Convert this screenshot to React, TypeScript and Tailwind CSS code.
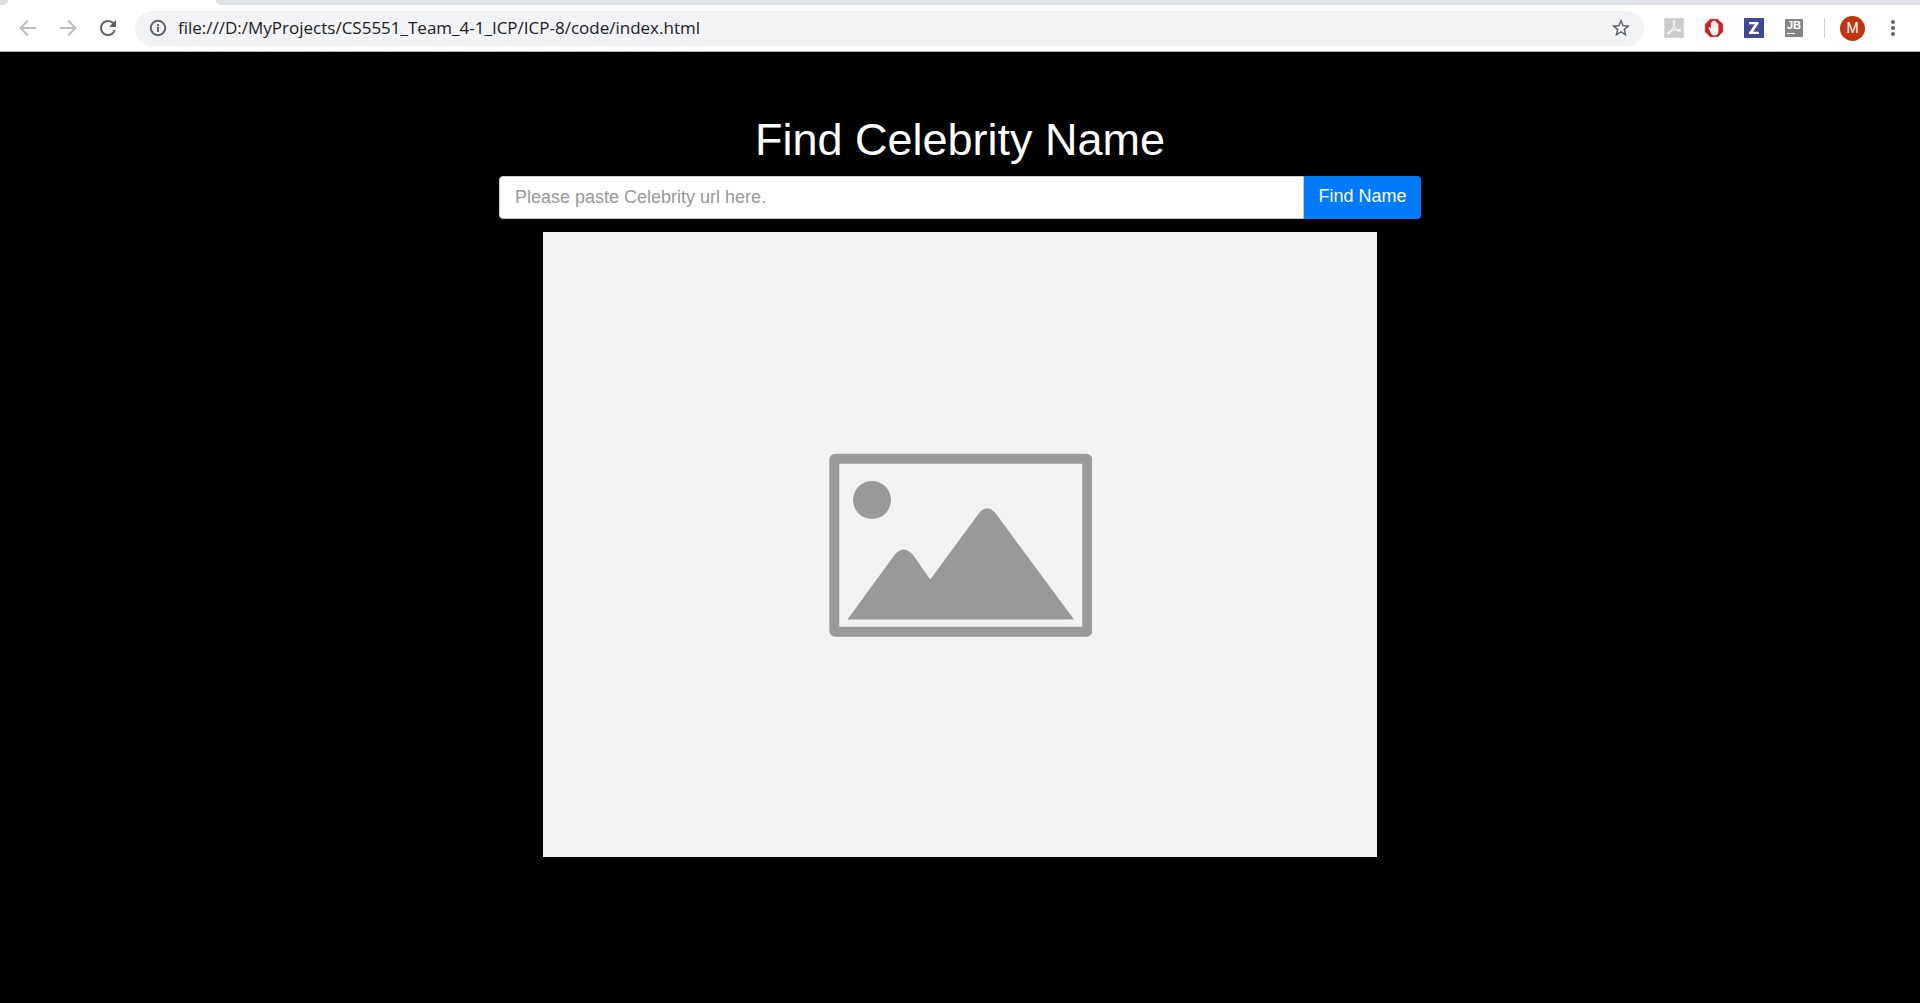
import React from "react";

function BrowserBar() {
  return (
    <header className="bg-white border-b border-[#b6b4b6]">
      <div className="flex h-[5px] bg-white">
        <div className="w-2 rounded-br-md bg-[#dee1e6]" />
        <div className="w-52" />
        <div className="flex-1 rounded-bl-md bg-[#dee1e6]" />
      </div>
      <div className="flex h-[46px] items-center pl-4">
        <button aria-label="Back" className="flex size-6 items-center justify-center text-[#bbbdbf]">
          <svg viewBox="0 0 24 24" className="size-6" fill="none" stroke="currentColor" strokeWidth="2">
            <path d="M20 12H5.500M12 4.500 4.500 12l7.500 7.500" />
          </svg>
        </button>
        <button aria-label="Forward" className="ml-4 flex size-6 items-center justify-center text-[#bbbdbf]">
          <svg viewBox="0 0 24 24" className="size-6" fill="none" stroke="currentColor" strokeWidth="2">
            <path d="M4 12h14.500M12 4.500l7.500 7.500-7.500 7.500" />
          </svg>
        </button>
        <button aria-label="Reload" className="ml-4 flex size-6 items-center justify-center text-[#5f6368]">
          <svg viewBox="0 0 24 24" className="size-6" fill="currentColor">
            <path d="M17.650 6.350A7.958 7.958 0 0 0 12 4a8 8 0 1 0 7.730 10h-2.080A6 6 0 1 1 12 6c1.660 0 3.140.69 4.220 1.780L13 11h7V4z" />
          </svg>
        </button>
        <div className="ml-[15px] flex h-[35px] flex-1 items-center rounded-full bg-[#f1f3f4] pl-[13px] pr-3">
          <svg viewBox="0 0 20 20" className="size-5 shrink-0 text-[#5f6368]" fill="none" stroke="currentColor" strokeWidth="2">
            <circle cx="10" cy="10" r="7.200" />
            <path d="M10 9v5M10 6v2" />
          </svg>
          <input
            aria-label="Address"
            defaultValue="file:///D:/MyProjects/CS5551_Team_4-1_ICP/ICP-8/code/index.html"
            className="ml-[10px] h-7 min-w-0 flex-1 bg-transparent pb-[2px] font-['Open_Sans',sans-serif] text-[17px] text-[#202124] outline-none"
          />
          <button aria-label="Bookmark this page" className="text-[#5f6368]">
            <svg viewBox="0 0 24 24" className="size-[22px]" fill="currentColor">
              <path d="M22 9.240l-7.190-.62L12 2 9.190 8.630 2 9.240l5.460 4.730L5.820 21 12 17.270 18.180 21l-1.630-7.030L22 9.240zM12 15.400l-3.760 2.270 1-4.280-3.320-2.880 4.380-.38L12 6.100l1.710 4.040 4.380.38-3.320 2.880 1 4.280L12 15.400z" />
            </svg>
          </button>
        </div>
        <div className="ml-5 flex items-center gap-5">
          <button aria-label="Acrobat">
            <svg viewBox="0 0 20 20" className="size-5">
              <rect x=".5" y=".5" width="19" height="19" fill="#cbcbcb" stroke="#d8d8d8" />
              <path
                d="M9.200 3.500C9.200 2.600 11 2.600 10.800 4.200 10.600 7.500 7.500 13 5 15.500c-.8.8-1.800.2-1.200-.6 1.600-2 7.200-3.600 11.400-3.200 1.800.2 1.600 1.700 0 1.500-3.200-.5-6-5.200-6-9.700z"
                fill="none"
                stroke="#f4f4f4"
                strokeWidth="1.200"
              />
            </svg>
          </button>
          <button aria-label="AdBlock">
            <svg viewBox="0 0 20 20" className="size-5">
              <path d="M6.200 1h7.600L19 6.200v7.600L13.800 19H6.200L1 13.800V6.200z" fill="#d9181b" stroke="#c9a5a5" strokeWidth=".6" />
              <path
                d="M6.200 13.500 4.500 10c-.4-1 .8-1.500 1.300-.7l1 1.400V4.900c0-1 1.400-1 1.400 0V3.500c0-1 1.600-1 1.600 0v-.3c0-1 1.600-1 1.600 0v1c0-1 1.500-1 1.500 0v1.600c0-1 1.500-1 1.500 0V13c0 3-1.500 4.500-4 4.500-2.200 0-3.400-1.500-4.200-4z"
                fill="#fff"
              />
              <path d="M8.200 4.500v5M9.800 4v5.500M11.400 4.200v5.300M12.900 5.600v4" stroke="#d9a9a9" strokeWidth=".4" />
            </svg>
          </button>
          <button aria-label="Zotero">
            <svg viewBox="0 0 20 20" className="size-5" fill="none" stroke="#fff">
              <rect width="20" height="20" fill="#3b4998" stroke="none" />
              <path d="M5 5.100h9.500M5 14.900h10" strokeWidth="2.400" />
              <path d="M13.200 4.800 6.600 15.200" strokeWidth="2.800" />
            </svg>
          </button>
          <button aria-label="JetBrains" className="flex size-5 items-center justify-center">
            <span className="flex size-[18px] flex-col bg-[#858585] pl-[2px] text-left text-[11px] leading-3 font-bold text-white">
              JB
              <span className="mt-[2px] h-px w-2 bg-white" />
            </span>
          </button>
        </div>
        <div className="ml-5 h-5 w-px bg-[#cfd1d4]" />
        <button
          aria-label="Profile"
          className="ml-[15px] size-[25px] rounded-full bg-[#bf360c] font-['Roboto',sans-serif] text-[14px] leading-[25px] text-white"
        >
          M
        </button>
        <button aria-label="Menu" className="mr-[17px] ml-[18px] flex w-5 flex-col items-center gap-[2px]">
          <span className="size-1 rounded-full bg-[#5f6368]" />
          <span className="size-1 rounded-full bg-[#5f6368]" />
          <span className="size-1 rounded-full bg-[#5f6368]" />
        </button>
      </div>
    </header>
  );
}

function Placeholder() {
  return (
    <div className="mx-auto mt-[13px] flex aspect-[834/625] w-[834px] max-w-full items-center justify-center bg-[#f1f2f4]">
      <svg viewBox="0 0 264 184" className="w-[264px]" role="img" aria-label="No image" fill="#98999b">
        <rect x="6.300" y="5.700" width="253" height="173" rx="1" fill="none" stroke="#98999b" strokeWidth="10" strokeLinejoin="round" />
        <circle cx="44" cy="47" r="19" />
        <path d="M19.500 166.500 66.500 102Q75.500 91 85 102L102.300 126.500 150 61.500Q159.200 49 168.500 61.500L246 166.500z" />
      </svg>
    </div>
  );
}

export default function App() {
  return (
    <div className="flex min-h-screen flex-col bg-black font-['Liberation_Sans',Arial,sans-serif]">
      <BrowserBar />
      <main className="mx-auto w-full max-w-[922px] flex-1 pt-[61px]">
        <h1 className="text-center text-[45px] leading-[54px] text-white">Find Celebrity Name</h1>
        <form className="mt-[9px] flex h-[43px]" onSubmit={(e) => e.preventDefault()}>
          <input
            type="text"
            aria-label="Celebrity url"
            placeholder="Please paste Celebrity url here."
            className="min-w-0 flex-1 rounded-l border border-[#cccccc] bg-white px-[15px] text-[18px] text-[#555555] outline-none placeholder:text-[#999999]"
          />
          <button className="w-[117px] rounded-r bg-[#007bff] pb-[3px] text-[18px] text-white">Find Name</button>
        </form>
        <Placeholder />
      </main>
    </div>
  );
}
